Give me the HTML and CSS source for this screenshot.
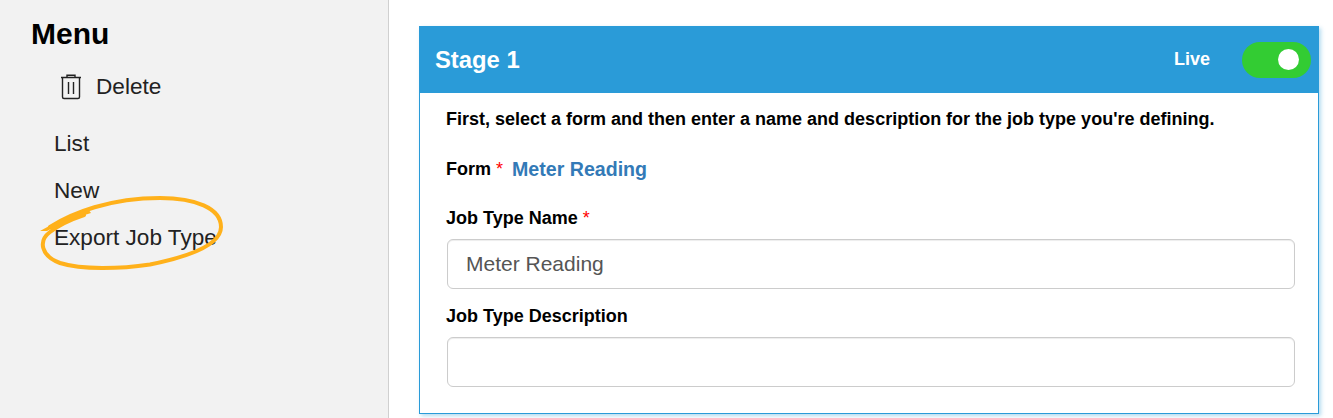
FILE: index.html
```html
<!DOCTYPE html>
<html lang="en">
<head>
    <meta charset="UTF-8">
    <title>Job Type</title>
    <link rel="stylesheet" href="styles.css">
</head>
<body>
    <div class="page">
        <div class="sidebar">
            <h2 class="menu-title">Menu</h2>
            <div class="menu-action">
                <svg class="trash-icon" width="22" height="26" viewBox="0 0 22 26" fill="none" stroke="#222" stroke-width="1.4">
                    <path d="M1 3.500h20M7 3.500V1.200h8v2.300"/>
                    <path d="M2.500 3.500V23a1.500 1.500 0 0 0 1.500 1.500h14a1.500 1.500 0 0 0 1.500-1.500V3.500"/>
                    <path d="M8.500 8v12M13.500 8v12"/>
                </svg>
                <span>Delete</span>
            </div>
            <ul class="menu-list">
                <li>List</li>
                <li>New</li>
                <li>Export Job Type</li>
            </ul>
            <!-- hand drawn highlight round the export link -->
            <svg class="scribble" width="240" height="90" viewBox="30 190 240 90" fill="none" stroke="#ffb11b" stroke-linecap="round">
                <path stroke-width="4" d="M50 227C72 213 110 198 160 198C195 198 221 208 221 227C221 244 192 256 150 264.500C120 269 82 270 60 263C41 256 38 241 50 232C60 224 72 219 84 215"/>
                <path fill="#ffb11b" stroke="none" d="M40 231L62 219L88 209L91 213L66 221L47 231Z"/>
            </svg>
        </div>
        <div class="content">
            <div class="stage-panel">
                <div class="stage-header">
                    <span class="stage-title">Stage 1</span>
                    <div class="live-wrap">
                        <span class="live-label">Live</span>
                        <span class="toggle"><span class="toggle-knob"></span></span>
                    </div>
                </div>
                <div class="stage-body">
                    <p class="intro">First, select a form and then enter a name and description for the job type you're defining.</p>
                    <div class="form-row">
                        <label class="field-label">Form <span class="required">*</span></label>
                        <a class="form-link">Meter Reading</a>
                    </div>
                    <label class="field-label name-label">Job Type Name <span class="required">*</span></label>
                    <input class="text-input" type="text" value="Meter Reading">
                    <label class="field-label desc-label">Job Type Description</label>
                    <input class="text-input" type="text">
                </div>
            </div>
        </div>
    </div>
</body>
</html>
```

FILE: styles.css
```css
* {
    margin: 0;
    padding: 0;
    box-sizing: border-box;
}

html, body {
    height: 418px;
    overflow: hidden;
}

body {
    font-family: 'Liberation Sans', Arial, sans-serif;
    background: white;
    color: #000;
}

.page {
    display: flex;
    height: 418px;
}

.sidebar {
    position: relative;
    width: 389px;
    flex-shrink: 0;
    background: #f2f2f2;
    border-right: 1px solid #d0d0d0;
    padding: 16px 0 0 31px;
}

.menu-title {
    font-size: 30px;
    line-height: 36px;
    font-weight: bold;
}

.menu-action {
    display: flex;
    align-items: center;
    gap: 14px;
    margin: 20px 0 0 29px;
    height: 30px;
    font-size: 22.6px;
    color: #222;
}

.trash-icon {
    flex-shrink: 0;
}

.menu-list {
    list-style: none;
    margin: 18px 0 0 23px;
    font-size: 22.6px;
    color: #222;
}

.menu-list li {
    height: 47px;
    line-height: 47px;
}

.scribble {
    position: absolute;
    left: 30px;
    top: 190px;
}

.content {
    flex: 1;
    padding: 26px 14px 0 30px;
}

.stage-panel {
    height: 388px;
    border: 1px solid #2a9bd8;
    box-shadow: 2px 2px 4px rgba(42, 155, 216, 0.35);
}

.stage-header {
    display: flex;
    justify-content: space-between;
    align-items: center;
    height: 67px;
    margin: -1px -1px 0;
    padding: 0 8px 0 16px;
    background: #2a9bd8;
    color: white;
}

.stage-title {
    font-size: 23.8px;
    font-weight: bold;
}

.live-wrap {
    display: flex;
    align-items: center;
    gap: 32px;
}

.live-label {
    font-size: 18px;
    font-weight: bold;
}

.toggle {
    display: flex;
    align-items: center;
    justify-content: flex-end;
    width: 69px;
    height: 36px;
    padding-right: 12px;
    background: #33cc33;
    border-radius: 18px;
}

.toggle-knob {
    width: 21px;
    height: 21px;
    background: white;
    border-radius: 50%;
}

.stage-body {
    padding: 14px 23px 0 26px;
}

.intro {
    font-size: 18px;
    line-height: 24px;
    font-weight: bold;
}

.form-row {
    display: flex;
    align-items: center;
    gap: 9px;
    margin-top: 26px;
    height: 24px;
}

.field-label {
    display: block;
    font-size: 18px;
    line-height: 22px;
    font-weight: bold;
}

.required {
    color: red;
    font-weight: normal;
}

.form-link {
    font-size: 19.6px;
    font-weight: bold;
    color: #337ab7;
}

.name-label {
    margin-top: 26px;
}

.desc-label {
    margin-top: 16px;
}

.text-input {
    display: block;
    width: 848px;
    height: 50px;
    margin: 10px 0 0 1px;
    padding: 0 18px;
    border: 1px solid #ccc;
    border-radius: 6px;
    font-family: inherit;
    font-size: 21px;
    color: #555;
    box-shadow: inset 0 1px 1px rgba(0, 0, 0, 0.075);
    outline: none;
}
```
